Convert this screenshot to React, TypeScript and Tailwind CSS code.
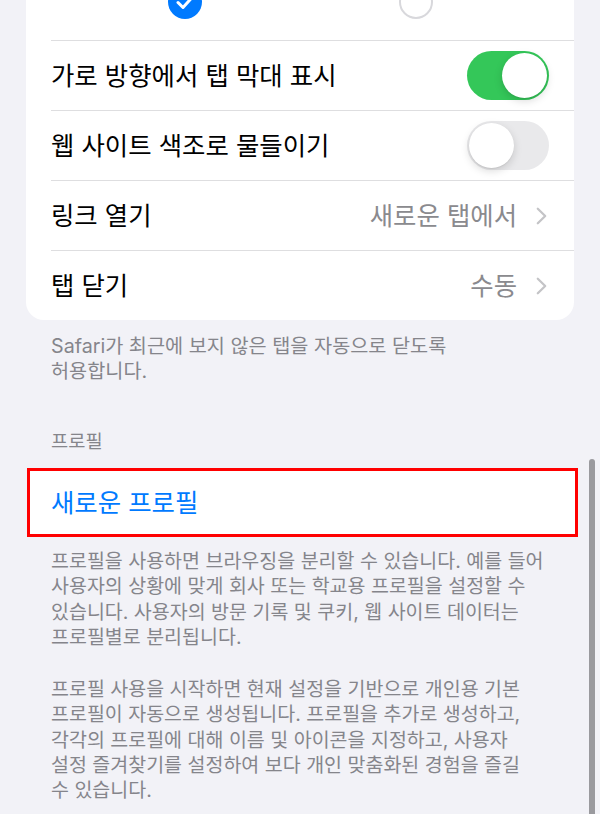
import type { ReactNode } from 'react';

const FONT = { fontFamily: '"Inter", "Noto Sans CJK KR", sans-serif' };

const Chevron = () => (
  <svg width="11" height="18" viewBox="0 0 11 18" fill="none">
    <path
      d="M1.8 1.8 L9.2 9 L1.8 16.2"
      stroke="#c4c4c7"
      strokeWidth="2.3"
      strokeLinecap="round"
      strokeLinejoin="round"
    />
  </svg>
);

const Toggle = ({ on }: { on: boolean }) => (
  <div
    className={
      on
        ? 'w-[82px] h-[49px] rounded-full bg-[#34c759] p-[2px] flex justify-end'
        : 'w-[82px] h-[49px] rounded-full bg-[#e9e9eb] p-[2px] flex justify-start'
    }
  >
    <div className="w-[45px] h-[45px] rounded-full bg-white shadow-[0_3px_8px_rgba(0,0,0,0.15),0_1px_1px_rgba(0,0,0,0.06)]" />
  </div>
);

const Row = ({ label, right }: { label: string; right: ReactNode }) => (
  <div className="pl-[25px]">
    <div className="h-[70px] border-t border-[#dedee0] flex items-center justify-between pr-[25px]">
      <span className="text-[25.4px] leading-[30px] text-black">{label}</span>
      {right}
    </div>
  </div>
);

const Value = ({ text }: { text: string }) => (
  <div className="flex items-center gap-[19px] pr-[2px]">
    <span className="text-[25.4px] leading-[30px] text-[#8a8a8e]">{text}</span>
    <Chevron />
  </div>
);

export default function App() {
  return (
    <div
      className="relative h-[814px] w-[600px] overflow-hidden bg-[#f2f2f7]"
      style={FONT}
    >
      <div className="-mt-[40px] px-[26px]">
        {/* settings card, top part scrolled away */}
        <div className="bg-white rounded-[18px]">
          <div className="h-[80px] pt-[25px] flex items-start pl-[142px] gap-[197px]">
            <div className="w-[34px] h-[34px] rounded-full bg-[#007aff] flex items-center justify-center">
              <svg width="34" height="34" viewBox="0 0 34 34" fill="none">
                <path
                  d="M10 17.5 L15 22.5 L24.5 12"
                  stroke="white"
                  strokeWidth="3"
                  strokeLinecap="round"
                  strokeLinejoin="round"
                />
              </svg>
            </div>
            <div className="w-[34px] h-[34px] rounded-full border-2 border-[#d8d8dc]" />
          </div>
          <Row label="가로 방향에서 탭 막대 표시" right={<Toggle on />} />
          <Row label="웹 사이트 색조로 물들이기" right={<Toggle on={false} />} />
          <Row label="링크 열기" right={<Value text="새로운 탭에서" />} />
          <Row label="탭 닫기" right={<Value text="수동" />} />
        </div>

        <p className="mt-[14px] px-[25px] text-[19.7px] leading-[25px] text-[#85858b] whitespace-nowrap">
          Safari가 최근에 보지 않은 탭을 자동으로 닫도록
          <br />
          허용합니다.
        </p>

        <p className="mt-[45px] px-[25px] text-[18.7px] leading-[25px] text-[#85858b]">
          프로필
        </p>
      </div>

      <div className="mt-[14px] ml-[27px] w-[551px] h-[69px] bg-white border-[3px] border-[#ff0000] flex items-center pl-[21px]">
        <span className="text-[25.4px] leading-[30px] text-[#007aff]">새로운 프로필</span>
      </div>

      <div className="mt-[12px] px-[51px] text-[19.5px] leading-[25.3px] text-[#85858b] whitespace-nowrap">
        <p>
          프로필을 사용하면 브라우징을 분리할 수 있습니다. 예를 들어
          <br />
          사용자의 상황에 맞게 회사 또는 학교용 프로필을 설정할 수
          <br />
          있습니다. 사용자의 방문 기록 및 쿠키, 웹 사이트 데이터는
          <br />
          프로필별로 분리됩니다.
        </p>
        <p className="mt-[27px]">
          프로필 사용을 시작하면 현재 설정을 기반으로 개인용 기본
          <br />
          프로필이 자동으로 생성됩니다. 프로필을 추가로 생성하고,
          <br />
          각각의 프로필에 대해 이름 및 아이콘을 지정하고, 사용자
          <br />
          설정 즐겨찾기를 설정하여 보다 개인 맞춤화된 경험을 즐길
          <br />
          수 있습니다.
        </p>
      </div>

      {/* scroll indicator */}
      <div className="absolute right-[5px] top-[459px] w-[6px] h-[400px] rounded-full bg-[#9a9a9e]" />
    </div>
  );
}
